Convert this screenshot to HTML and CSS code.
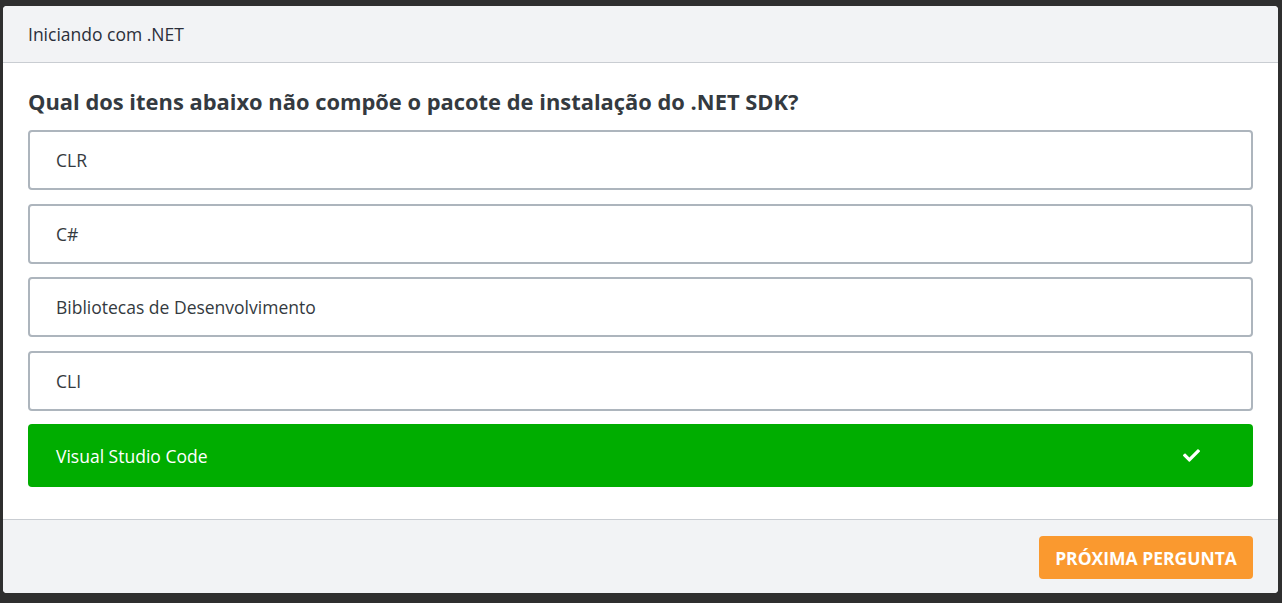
FILE: index.html
```html
<!DOCTYPE html>
<html lang="pt-BR">
<head>
<meta charset="utf-8">
<title>Iniciando com .NET</title>
<link rel="stylesheet" href="styles.css">
</head>
<body>
<div class="card">
  <div class="card-header">Iniciando com .NET</div>
  <div class="card-body">
    <h2 class="question">Qual dos itens abaixo não compõe o pacote de instalação do .NET SDK?</h2>
    <div class="options">
      <div class="option">CLR</div>
      <div class="option">C#</div>
      <div class="option">Bibliotecas de Desenvolvimento</div>
      <div class="option">CLI</div>
      <div class="option option-correct">
        <span>Visual Studio Code</span>
        <svg class="check" viewBox="0 0 512 512" width="16" height="16" aria-hidden="true"><path fill="#ffffff" d="M173.898 439.404l-166.4-166.4c-9.997-9.997-9.997-26.206 0-36.204l36.203-36.204c9.997-9.998 26.207-9.998 36.204 0L192 312.69 432.095 72.596c9.997-9.997 26.207-9.997 36.204 0l36.203 36.204c9.997 9.997 9.997 26.206 0 36.204l-294.4 294.401c-9.998 9.997-26.207 9.997-36.204-.001z"/></svg>
      </div>
    </div>
  </div>
  <div class="card-footer">
    <button class="btn-next">PRÓXIMA PERGUNTA</button>
  </div>
</div>
</body>
</html>
```

FILE: styles.css
```css
* { box-sizing: border-box; }

html, body {
  margin: 0;
  background: #2f2f2f;
}

body {
  padding: 6px 4px 0 3px;
  font-family: "Open Sans", "Noto Sans", sans-serif;
  color: #343a40;
}

.card {
  background: #ffffff;
  border-radius: 4px;
  overflow: hidden;
}

.card-header {
  height: 57px;
  display: flex;
  align-items: center;
  padding: 0 25px;
  background: #f2f3f5;
  border-bottom: 1px solid #c9cdd2;
  font-size: 17.5px;
  color: #2b2f3a;
}

.card-body {
  padding: 25px 25px 32px;
}

.question {
  margin: 0 0 14px;
  font-size: 21.9px;
  line-height: 28px;
  font-weight: 700;
  color: #343a40;
}

.options {
  display: flex;
  flex-direction: column;
  gap: 13.5px;
}

.option {
  height: 60px;
  display: flex;
  align-items: center;
  padding: 0 26px;
  border: 2px solid #adb5bd;
  border-radius: 4px;
  font-size: 17.5px;
  color: #343a40;
}

.option-correct {
  height: 63px;
  border: none;
  padding: 0 53px 0 28px;
  background: #00ad00;
  color: #ffffff;
  font-weight: 500;
  justify-content: space-between;
}

.check {
  width: 17px;
  height: 17px;
}

.card-footer {
  height: 74px;
  display: flex;
  justify-content: flex-end;
  align-items: flex-start;
  padding: 16px 25px 0;
  background: #f2f3f5;
  border-top: 1px solid #c9cdd2;
}

.btn-next {
  height: 43px;
  width: 214px;
  border: none;
  border-radius: 4px;
  background: #fa992f;
  color: #ffffff;
  font-family: "Open Sans", "Noto Sans", sans-serif;
  font-size: 17.5px;
  font-weight: 700;
  padding: 0;
}
```
